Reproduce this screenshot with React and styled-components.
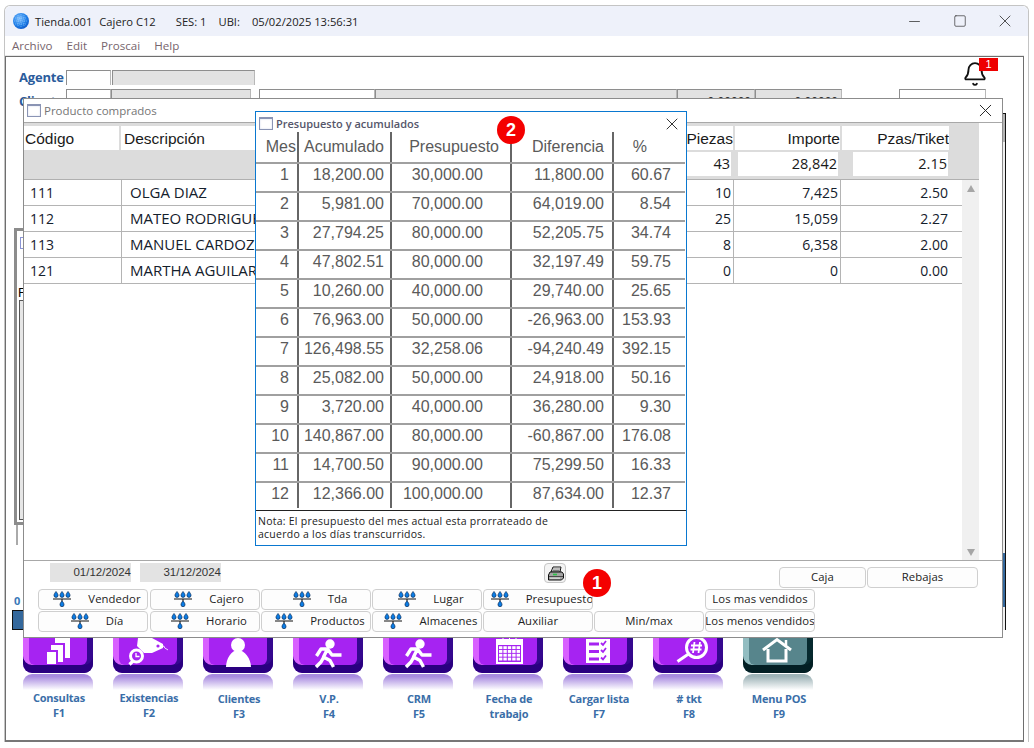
import React from "react";
import styled, { createGlobalStyle } from "styled-components";
import { Bell, X, Minus, Square } from "lucide-react";

const Global = createGlobalStyle`
  html, body { margin: 0; padding: 0; background: #fff; }
  body { font-family: "Open Sans", "Liberation Sans", sans-serif; overflow: hidden; }
  * { box-sizing: border-box; }
`;

const Desktop = styled.div`
  position: relative;
  width: 1034px;
  height: 748px;
  overflow: hidden;
  background: #fff;
`;

const AppWindow = styled.div`
  position: absolute;
  left: 4px;
  top: 5px;
  width: 1025px;
  height: 737px;
  display: flex;
  flex-direction: column;
  border: 1px solid #c4c4c4;
  border-bottom: 0;
  border-radius: 6px 6px 0 0;
  background: #fff;
`;

const TitleBar = styled.div`
  height: 30px;
  flex: none;
  display: flex;
  align-items: center;
  padding-left: 8px;
  background: #eef1fa;
  border-radius: 6px 6px 0 0;
  font-size: 11.2px;
  color: #222;
`;

const TitleText = styled.span`
  margin-left: ${p => p.$gap}px;
  white-space: nowrap;
`;

const WinControls = styled.div`
  margin-left: auto;
  margin-right: 1px;
  display: flex;
  align-items: center;
  color: #333;
`;

const WinControl = styled.span`
  width: 45px;
  display: flex;
  justify-content: center;
`;

const MenuBar = styled.div`
  height: 19px;
  flex: none;
  display: flex;
  align-items: center;
  gap: 14px;
  padding-left: 7px;
  font-size: 11.6px;
  color: #77656d;
`;

const ClientArea = styled.div`
  flex: 1;
  margin-right: 4px;
  display: flex;
  flex-direction: column;
  border: 1px solid #6e6e6e;
  border-top-width: 1px;
  border-bottom: 2px solid #777;
  box-shadow: 0 -1px 0 #e8e8e8;
  margin-top: 1px;
  min-height: 0;
`;

const FormArea = styled.div`
  position: relative;
  height: 56px;
  flex: none;
  padding: 13px 0 0 13px;
  display: flex;
  flex-direction: column;
  gap: 4px;
`;

const FormRow = styled.div`
  display: flex;
  height: 15px;
`;

const FormLabel = styled.span`
  width: 47px;
  padding-top: ${p => p.$drop || 0}px;
  font-size: 13px;
  line-height: 15px;
  font-weight: 700;
  color: #2b5c9c;
  letter-spacing: -0.2px;
`;

const Field = styled.div`
  width: ${p => p.$w}px;
  margin-left: ${p => p.$ml || 0}px;
  height: 15px;
  background: ${p => (p.$gray ? "#e2e2e2" : "#fff")};
  border-top: 1px solid #8e8e8e;
  border-left: 1px solid #8e8e8e;
  border-right: 1px solid #b8b8b8;
  font: 12px/24px "Liberation Sans", sans-serif;
  text-align: right;
  padding-right: 3px;
  color: #333;
`;

const BellWrap = styled.div`
  position: absolute;
  left: 956px;
  top: 4px;
  width: 26px;
  height: 26px;
  color: #111;
`;

const BellBadge = styled.span`
  position: absolute;
  left: 17px;
  top: -3px;
  width: 19px;
  height: 13px;
  background: #ee0000;
  color: #fff;
  font: 11px/13px "Liberation Sans", sans-serif;
  text-align: center;
`;

const MiddleArea = styled.div`
  height: 517px;
  flex: none;
  display: flex;
  padding-left: 6px;
`;

const LeftColumn = styled.div`
  width: 17px;
  padding-top: 115px;
  display: flex;
  flex-direction: column;
`;

const LeftPanel = styled.div`
  height: 297px;
  margin-left: 2px;
  border: 3px solid #8c8c8c;
  border-right: 0;
  font: 13px/15px "Liberation Sans", sans-serif;
  padding: 6px 0 0 1px;
  display: flex;
  flex-direction: column;
`;

const LeftGlyph = styled.span`
  width: 8px;
  height: 12px;
  margin-left: 2px;
  margin-bottom: 36px;
  border: 1px solid #8a94d4;
`;

const LeftInner = styled.div`
  flex: 1;
  margin: 0 0 2px 1px;
  background: #e6e6e6;
  border: 1px solid #555;
  border-right: 0;
`;

const LeftStub = styled.div`
  height: 20px;
  margin-left: 4px;
  border-left: 2px solid #aaa;
`;

const ZeroLabel = styled.span`
  margin-top: 48px;
  height: 17px;
  padding-left: 2px;
  font-size: 11px;
  font-weight: 700;
  color: #3a78b8;
`;

const BlueBox = styled.div`
  height: 20px;
  background: #34689c;
  border: 1px solid #111;
`;

const RightColumn = styled.div`
  width: 4px;
  margin-left: auto;
  margin-right: 17px;
  display: flex;
  flex-direction: column;
  border-right: 1px solid #111;
  border-top: 1px solid #111;
  background: #efefef;
`;

const RightGrip = styled.div`
  height: 28px;
  background: #b4b4b4;
`;

const RightBlue = styled.div`
  margin-top: auto;
  height: 54px;
  margin-bottom: 23px;
  background: #34689c;
`;

const KeysRow = styled.div`
  display: flex;
  gap: 20px;
  padding-left: 17px;
`;

const KeyItem = styled.div`
  width: 70px;
  display: flex;
  flex-direction: column;
  align-items: center;
`;

const KeyTile = styled.div`
  width: 70px;
  height: 43px;
  flex: none;
  padding: 0 6px 8px;
  border-radius: 0 0 9px 9px;
  background: linear-gradient(90deg, ${p => p.$light} 0 50%, ${p => p.$dark} 50%);
  box-shadow: inset 0 -8px 0 ${p => p.$bottom};
`;

const KeyFace = styled.div`
  height: 35px;
  border-radius: 0 0 6px 6px;
  background: ${p => p.$face};
  display: flex;
  align-items: flex-end;
  color: #fff;
`;

const KeyIcon = styled.svg`
  width: 58px;
  height: 30px;
  margin-bottom: -2px;
  overflow: visible;
  flex: none;
`;

const KeyReflection = styled.div`
  width: 70px;
  height: 16px;
  flex: none;
  margin-top: 1px;
  border-radius: 9px 9px 0 0;
  background: linear-gradient(180deg, ${p => p.$tint} 0%, ${p => p.$tint} 15%, #ffffff 100%);
`;

const KeyLabel = styled.div`
  width: 90px;
  margin-top: ${p => (p.$up ? 0 : 1)}px;
  margin-left: 2px;
  text-align: center;
  font-size: 11px;
  line-height: 15px;
  font-weight: 700;
  color: #3a6ea8;
  letter-spacing: -0.2px;
`;

const ProductWindow = styled.div`
  position: absolute;
  left: 23px;
  top: 98px;
  width: 980px;
  height: 540px;
  display: flex;
  flex-direction: column;
  background: #fff;
  border: 1px solid #8c8c8c;
`;

const ProductTitle = styled.div`
  height: 24px;
  flex: none;
  display: flex;
  align-items: center;
  padding-left: 3px;
  gap: 3px;
  font-size: 11.5px;
  color: #757575;
  border-bottom: 1px solid #a8a8a8;
`;

const WindowGlyph = styled.span`
  width: 14px;
  height: 13px;
  flex: none;
  background: #fff;
  border: 1px solid #8a94b4;
  border-top: 2px solid #8a94b4;
  box-shadow: inset 0 0 2px #cfd6ea;
`;

const CloseBtn = styled.span`
  margin-left: auto;
  display: flex;
  color: #222;
  margin-right: ${p => p.$mr}px;
`;

const ProductHead = styled.div`
  width: 955px;
  height: 57px;
  flex: none;
  background: #dcdcdc;
  display: flex;
  flex-direction: column;
  border-bottom: 1px solid #b0b0b0;
`;

const HeadRow = styled.div`
  display: grid;
  grid-template-columns: 97px 561px 53px 107px 109px;
  height: 24px;
  margin-top: 3px;
  font: 15.5px/25px "Liberation Sans", sans-serif;
  color: #1a1a1a;
`;

const HeadCell = styled.div`
  background: #fff;
  text-align: ${p => (p.$right ? "right" : "left")};
  margin-right: 2px;
  padding: 0 ${p => (p.$right ? 0 : p.$pl || 1)}px;
  overflow: hidden;
  white-space: nowrap;
`;

const TotalRow = styled.div`
  display: grid;
  grid-template-columns: 658px 49px 7px 100px 15px 95px;
  height: 24px;
  margin-top: 2px;
  font: 14.5px/24px "Open Sans", sans-serif;
  color: #1a1a1a;
`;

const TotalCell = styled.div`
  grid-column: ${p => p.$col};
  background: #fff;
  text-align: right;
  padding-right: 1px;
`;

const ProductBody = styled.div`
  flex: 1;
  display: flex;
  min-height: 0;
`;

const RowsList = styled.div`
  flex: 1;
  display: flex;
  flex-direction: column;
`;

const DataRow = styled.div`
  display: grid;
  grid-template-columns: 98px 560px 52px 107px 121px;
  height: 26px;
  border-bottom: 1px solid #b4b4b4;
  font-size: 14px;
  line-height: 25px;
  color: #14202c;
`;

const DataCell = styled.div`
  padding: ${p => (p.$right ? "0 2px 0 0" : "0 0 0 6px")};
  text-align: ${p => (p.$right ? "right" : "left")};
  border-right: 1px solid #b4b4b4;
  white-space: nowrap;
  overflow: hidden;
  &:last-child { border-right: 0; padding-right: 14px; }
`;

const NameCell = styled(DataCell)`
  padding-left: 8px;
  font-size: 15px;
`;

const ScrollBar = styled.div`
  width: 17px;
  margin-right: 23px;
  background: #f0f0f0;
  display: flex;
  flex-direction: column;
  justify-content: space-between;
  align-items: center;
  padding: 5px 0 4px;
`;

const ScrollArrow = styled.span`
  width: 0;
  height: 0;
  border-left: 4.5px solid transparent;
  border-right: 4.5px solid transparent;
  ${p => (p.$down ? "border-top: 7px solid #a6a6a6;" : "border-bottom: 7px solid #a6a6a6;")}
`;

const Footer = styled.div`
  height: 77px;
  flex: none;
  border-top: 1px solid #a8a8a8;
  padding: 2px 24px 0 14px;
  display: flex;
  flex-direction: column;
`;

const FooterTop = styled.div`
  height: 26px;
  flex: none;
  display: flex;
  align-items: flex-start;
`;

const DateField = styled.div`
  width: 81px;
  height: 19px;
  margin-left: ${p => p.$ml}px;
  background: #e3e3e3;
  font: 11.5px/19px "Liberation Sans", sans-serif;
  color: #333;
  text-align: right;
`;

const PrintButton = styled.button`
  width: 22px;
  height: 20px;
  margin-left: 323px;
  padding: 0;
  display: flex;
  align-items: center;
  justify-content: center;
  background: #f4f4f4;
  border: 1px solid #c6c6c6;
  border-radius: 4px;
`;

const SideButtons = styled.div`
  margin-left: auto;
  margin-top: 4px;
  display: flex;
  gap: 1px;
`;

const Btn = styled.button`
  width: ${p => p.$w || 110}px;
  height: ${p => p.$h || 21}px;
  grid-column: ${p => p.$col || "auto"};
  padding: 0 0 2px ${p => (p.$icon ? 8 : 0)}px;
  display: flex;
  align-items: center;
  justify-content: center;
  gap: 17px;
  background: #fdfdfd;
  border: 1px solid #cfcfcf;
  border-radius: 4px;
  font: 11.3px "Open Sans", sans-serif;
  letter-spacing: 0.1px;
  color: #222;
  white-space: nowrap;
  overflow: hidden;
`;

const ButtonGrid = styled.div`
  display: grid;
  grid-template-columns: 112px repeat(6, 111px);
  row-gap: 1px;
`;

const Badge = styled.span`
  position: absolute;
  left: ${p => p.$x}px;
  top: ${p => p.$y}px;
  width: 28px;
  height: 28px;
  border-radius: 50%;
  background: #f40000;
  color: #fff;
  font: 700 18px/28px "Liberation Sans", sans-serif;
  text-align: center;
  z-index: 5;
`;

const BudgetWindow = styled.div`
  position: absolute;
  left: 255px;
  top: 111px;
  width: 432px;
  height: 435px;
  display: flex;
  flex-direction: column;
  background: #fff;
  border: 1px solid #0a78d0;
`;

const BudgetTitle = styled.div`
  height: 20px;
  flex: none;
  display: flex;
  align-items: center;
  padding: 3px 0 0 3px;
  gap: 3px;
  font-size: 11px;
  font-weight: 600;
  color: #55566a;
`;

const BudgetRow = styled.div`
  display: grid;
  grid-template-columns: 43px 93px 120px 102px 71px;
  width: 429px;
  height: ${p => p.$h || 29}px;
  border-bottom: ${p => (p.$last ? "0" : "2px solid #a0a0a0")};
  font: ${p => (p.$head ? "16px/30px" : "16px/21px")} "Liberation Sans", sans-serif;
  color: #5a5a5a;
`;

const BudgetCell = styled.div`
  text-align: right;
  padding-right: ${p => p.$pad}px;
  border-right: 2px solid #666;
  white-space: nowrap;
  &:last-child { border-right: 0; }
`;

const Note = styled.div`
  margin-top: 2px;
  height: 34px;
  flex: none;
  border-top: 1px solid #222;
  padding: 4px 0 0 2px;
  font-size: 10.5px;
  line-height: 13px;
  letter-spacing: 0.25px;
  color: #222;
`;

const NoteLine = styled.div`
  white-space: nowrap;
`;

const Globe = () => (
  <svg width="16" height="16" viewBox="0 0 16 16">
    <defs>
      <radialGradient id="gl" cx="0.4" cy="0.35" r="0.75">
        <stop offset="0" stopColor="#7fc0ff" />
        <stop offset="0.6" stopColor="#1f7fe8" />
        <stop offset="1" stopColor="#0b4fc0" />
      </radialGradient>
    </defs>
    <circle cx="8" cy="8" r="8" fill="url(#gl)" />
    <g stroke="#bfe0ff" strokeWidth="0.5" strokeDasharray="1 1" fill="none" opacity="0.8">
      <path d="M2 5h12M1 8h14M2 11h12M5 2v12M8 1v14M11 2v12" />
    </g>
  </svg>
);

const Drops = () => {
  const drop = "c1.3 1.7 2 2.7 2 3.9a2 2 0 0 1-4 0c0-1.2.7-2.2 2-3.9z";
  return (
    <svg width="18" height="16" viewBox="0 0 18 16" style={{ flex: "none" }}>
      <g fill="#0b7de6" stroke="#082a55" strokeWidth="0.7">
        <path d={`M3 0.5${drop}`} />
        <path d={`M9 0.5${drop}`} />
        <path d={`M15 0.5${drop}`} />
        <path d={`M9 9.8${drop}`} />
      </g>
      <path d="M0 8h18" stroke="#111" strokeWidth="1" />
      <path d="M9 8v2" stroke="#111" strokeWidth="1" />
    </svg>
  );
};

const Printer = () => (
  <svg width="17" height="15" viewBox="0 0 17 15">
    <path d="M6 1h8l-1 5H4z" fill="#fff" stroke="#111" strokeWidth="1" />
    <path d="M6 3h7M5.5 4.5h7" stroke="#444" strokeWidth="0.7" />
    <path d="M3 6h12l1.5 2v4l-2 2h-13V9z" fill="#a4a4a4" stroke="#111" strokeWidth="1" />
    <path d="M2 10.5h14" stroke="#333" strokeWidth="0.8" />
    <rect x="6" y="7.7" width="4" height="1.6" fill="#2fc24a" />
    <path d="M3 12.2h10" stroke="#e8e8e8" strokeWidth="1" />
  </svg>
);

const Runner = () => (
  <>
    <circle cx="31" cy="7" r="4.7" fill="#fff" />
    <path
      d="M17.5 19l4.5-7h6.5l-4 8 6.5 3.5 3.5 6.5M24.5 20.5L22 25l-5 5M28.5 12l4.5 6h9.5"
      fill="none"
      stroke="#fff"
      strokeWidth="3.4"
      strokeLinejoin="round"
    />
  </>
);

const icons = {
  pages: (
    <path
      fill="#fff"
      d="M18 15h9v12h-9zM22 8h12v17h-5V13h-7zM26 1h15v20h-5V6H26z"
    />
  ),
  tag: (
    <>
      <path fill="#fff" d="M19 1h14l11 6v4L33 16H25l-7-7z" />
      <circle cx="39" cy="9" r="1.6" fill="#a623f2" />
      <path d="M44 9c2 0 1 2 2.5 2.5S48 13 49 12.5" fill="none" stroke="#fff" strokeWidth="1" />
      <circle cx="17.5" cy="19" r="6" fill="#a623f2" stroke="#fff" strokeWidth="3" />
      <path d="M14 24l-3.5 3.5" stroke="#fff" strokeWidth="3.2" />
      <path d="M17 16v3.5h3.5" fill="none" stroke="#fff" strokeWidth="1.3" />
    </>
  ),
  person: (
    <>
      <circle cx="29" cy="8" r="7" fill="#fff" />
      <path fill="#fff" d="M17 30c0-8 5.5-17 12-17s13 9 13 17z" />
    </>
  ),
  runner: <Runner />,
  calendar: (
    <>
      <rect x="17" y="2" width="27" height="25" fill="#fff" />
      <rect x="19" y="8" width="23" height="17" fill="#a623f2" />
      {[0, 1, 2, 3].map(r =>
        [0, 1, 2, 3, 4].map(c => (
          <rect key={`${r}${c}`} x={20 + c * 4.4} y={9.2 + r * 3.8} width="3.4" height="2.9" fill="#fff" />
        ))
      )}
      <path d="M24 0v4M30.5 0v4M37 0v4" stroke="#fff" strokeWidth="1" />
    </>
  ),
  list: (
    <>
      <rect x="17" y="2" width="24" height="24" fill="#fff" />
      <path d="M20 7h10M20 14.5h10M20 22h10" stroke="#a623f2" strokeWidth="3" />
      <path d="M32 6l2 2 3-4M32 13l2 2 3-4M32 20.5l2 2 3-4" fill="none" stroke="#a623f2" strokeWidth="1.8" />
    </>
  ),
  search: (
    <>
      <circle cx="37.5" cy="10.5" r="10" fill="none" stroke="#fff" strokeWidth="3" />
      <path d="M29.5 17l-11 7.5" stroke="#fff" strokeWidth="3" />
      <path d="M35.5 5l-1.5 11M41 5l-1.5 11M32 8.5h11M31.5 12.5h11" fill="none" stroke="#fff" strokeWidth="1.8" />
    </>
  ),
  home: (
    <>
      <path d="M14 13L28 2.5 42 13" fill="none" stroke="#fff" strokeWidth="3" />
      <path d="M37 3v5" stroke="#fff" strokeWidth="2.5" />
      <path d="M19 12v12h18V12" fill="none" stroke="#fff" strokeWidth="3" />
    </>
  ),
};

const PURPLE = { face: "#a623f2", light: "#d860ff", dark: "#35088e", bottom: "#2a0080", tint: "#a88be0" };
const TEAL = { face: "#57858c", light: "#92bdc1", dark: "#06292e", bottom: "#031f24", tint: "#9fb4b8" };

const keys = [
  { icon: "pages", lines: ["Consultas", "F1"], up: true },
  { icon: "tag", lines: ["Existencias", "F2"], up: true },
  { icon: "person", lines: ["Clientes", "F3"] },
  { icon: "runner", lines: ["V.P.", "F4"] },
  { icon: "runner", lines: ["CRM", "F5"] },
  { icon: "calendar", lines: ["Fecha de", "trabajo"] },
  { icon: "list", lines: ["Cargar lista", "F7"] },
  { icon: "search", lines: ["# tkt", "F8"] },
  { icon: "home", lines: ["Menu POS", "F9"], teal: true },
];

const productRows = [
  ["111", "OLGA DIAZ", "10", "7,425", "2.50"],
  ["112", "MATEO RODRIGUEZ", "25", "15,059", "2.27"],
  ["113", "MANUEL CARDOZO", "8", "6,358", "2.00"],
  ["121", "MARTHA AGUILAR", "0", "0", "0.00"],
];

const budgetRows = [
  ["1", "18,200.00", "30,000.00", "11,800.00", "60.67"],
  ["2", "5,981.00", "70,000.00", "64,019.00", "8.54"],
  ["3", "27,794.25", "80,000.00", "52,205.75", "34.74"],
  ["4", "47,802.51", "80,000.00", "32,197.49", "59.75"],
  ["5", "10,260.00", "40,000.00", "29,740.00", "25.65"],
  ["6", "76,963.00", "50,000.00", "-26,963.00", "153.93"],
  ["7", "126,498.55", "32,258.06", "-94,240.49", "392.15"],
  ["8", "25,082.00", "50,000.00", "24,918.00", "50.16"],
  ["9", "3,720.00", "40,000.00", "36,280.00", "9.30"],
  ["10", "140,867.00", "80,000.00", "-60,867.00", "176.08"],
  ["11", "14,700.50", "90,000.00", "75,299.50", "16.33"],
  ["12", "12,366.00", "100,000.00", "87,634.00", "12.37"],
];

const pads = [8, 6, 27, 8, 14];
const headPads = [1, 6, 11, 8, 38];

const gridButtons = [
  ["Vendedor", 1],
  ["Cajero", 1],
  ["Tda", 1],
  ["Lugar", 1],
  ["Presupuesto", 1],
  ["Los mas vendidos", 0, "7"],
  ["Día", 1],
  ["Horario", 1],
  ["Productos", 1],
  ["Almacenes", 1],
  ["Auxiliar", 0],
  ["Min/max", 0],
  ["Los menos vendidos", 0],
];

export default function App() {
  return (
    <Desktop>
      <Global />
      <AppWindow>
        <TitleBar>
          <Globe />
          <TitleText $gap={6}>Tienda.001</TitleText>
          <TitleText $gap={7}>Cajero C12</TitleText>
          <TitleText $gap={20}>SES: 1</TitleText>
          <TitleText $gap={12}>UBI:</TitleText>
          <TitleText $gap={12}>05/02/2025 13:56:31</TitleText>
          <WinControls>
            <WinControl><Minus size={17} strokeWidth={1.1} /></WinControl>
            <WinControl><Square size={14} strokeWidth={1.2} /></WinControl>
            <WinControl><X size={20} strokeWidth={1} /></WinControl>
          </WinControls>
        </TitleBar>
        <MenuBar>
          <span>Archivo</span>
          <span>Edit</span>
          <span>Proscai</span>
          <span>Help</span>
        </MenuBar>
        <ClientArea>
          <FormArea>
            <FormRow>
              <FormLabel>Agente</FormLabel>
              <Field $w={45} />
              <Field $w={143} $ml={1} $gray />
            </FormRow>
            <FormRow>
              <FormLabel $drop={5}>Cliente</FormLabel>
              <Field $w={45} />
              <Field $w={140} $gray />
              <Field $w={116} $ml={8} />
              <Field $w={302} $gray />
              <Field $w={78} $gray>0.00000</Field>
              <Field $w={87} $gray>0.00000</Field>
              <Field $w={87} $ml={57} />
            </FormRow>
            <BellWrap>
              <Bell size={26} strokeWidth={1.7} />
              <BellBadge>1</BellBadge>
            </BellWrap>
          </FormArea>
          <MiddleArea>
            <LeftColumn>
              <LeftPanel>
                <LeftGlyph />
                F
                <LeftInner />
              </LeftPanel>
              <LeftStub />
              <ZeroLabel>0</ZeroLabel>
              <BlueBox />
            </LeftColumn>
            <RightColumn>
              <RightGrip />
              <RightBlue />
            </RightColumn>
          </MiddleArea>
          <KeysRow>
            {keys.map(k => {
              const c = k.teal ? TEAL : PURPLE;
              return (
                <KeyItem key={k.lines[0]}>
                  <KeyTile $light={c.light} $dark={c.dark} $bottom={c.bottom}>
                    <KeyFace $face={c.face}>
                      <KeyIcon viewBox="0 0 58 30">{icons[k.icon]}</KeyIcon>
                    </KeyFace>
                  </KeyTile>
                  <KeyReflection $tint={c.tint} />
                  <KeyLabel $up={k.up}>
                    {k.lines[0]}
                    <br />
                    {k.lines[1]}
                  </KeyLabel>
                </KeyItem>
              );
            })}
          </KeysRow>
        </ClientArea>
      </AppWindow>

      <ProductWindow>
        <ProductTitle>
          <WindowGlyph />
          Producto comprados
          <CloseBtn $mr={6}><X size={21} strokeWidth={1.1} /></CloseBtn>
        </ProductTitle>
        <ProductHead>
          <HeadRow>
            <HeadCell>Código</HeadCell>
            <HeadCell $pl={3}>Descripción</HeadCell>
            <HeadCell $right>Piezas</HeadCell>
            <HeadCell $right>Importe</HeadCell>
            <HeadCell $right>Pzas/Tiket</HeadCell>
          </HeadRow>
          <TotalRow>
            <TotalCell $col="2">43</TotalCell>
            <TotalCell $col="4">28,842</TotalCell>
            <TotalCell $col="6">2.15</TotalCell>
          </TotalRow>
        </ProductHead>
        <ProductBody>
          <RowsList>
            {productRows.map(r => (
              <DataRow key={r[0]}>
                <DataCell>{r[0]}</DataCell>
                <NameCell>{r[1]}</NameCell>
                <DataCell $right>{r[2]}</DataCell>
                <DataCell $right>{r[3]}</DataCell>
                <DataCell $right>{r[4]}</DataCell>
              </DataRow>
            ))}
          </RowsList>
          <ScrollBar>
            <ScrollArrow />
            <ScrollArrow $down />
          </ScrollBar>
        </ProductBody>
        <Footer>
          <FooterTop>
            <DateField $ml={12}>01/12/2024</DateField>
            <DateField $ml={9}>31/12/2024</DateField>
            <PrintButton aria-label="Imprimir"><Printer /></PrintButton>
            <SideButtons>
              <Btn $w={87}>Caja</Btn>
              <Btn $w={111}>Rebajas</Btn>
            </SideButtons>
          </FooterTop>
          <ButtonGrid>
            {gridButtons.map(([label, icon, col]) => (
              <Btn key={label} $icon={icon} $col={col}>
                {icon ? <Drops /> : null}
                {label}
              </Btn>
            ))}
          </ButtonGrid>
        </Footer>
      </ProductWindow>

      <BudgetWindow>
        <BudgetTitle>
          <WindowGlyph />
          Presupuesto y acumulados
          <CloseBtn $mr={4}><X size={20} strokeWidth={1.1} /></CloseBtn>
        </BudgetTitle>
        <BudgetRow $head $h={32}>
          {["Mes", "Acumulado", "Presupuesto", "Diferencia", "%"].map((h, i) => (
            <BudgetCell key={h} $pad={headPads[i]}>{h}</BudgetCell>
          ))}
        </BudgetRow>
        {budgetRows.map((r, idx) => (
          <BudgetRow key={r[0]} $last={idx === 11} $h={idx === 11 ? 25 : 29}>
            {r.map((v, i) => (
              <BudgetCell key={i} $pad={pads[i]}>{v}</BudgetCell>
            ))}
          </BudgetRow>
        ))}
        <Note>
          <NoteLine>Nota: El presupuesto del mes actual esta prorrateado de</NoteLine>
          <NoteLine>acuerdo a los días transcurridos.</NoteLine>
        </Note>
      </BudgetWindow>

      <Badge $x={497} $y={116}>2</Badge>
      <Badge $x={583} $y={569}>1</Badge>
    </Desktop>
  );
}
